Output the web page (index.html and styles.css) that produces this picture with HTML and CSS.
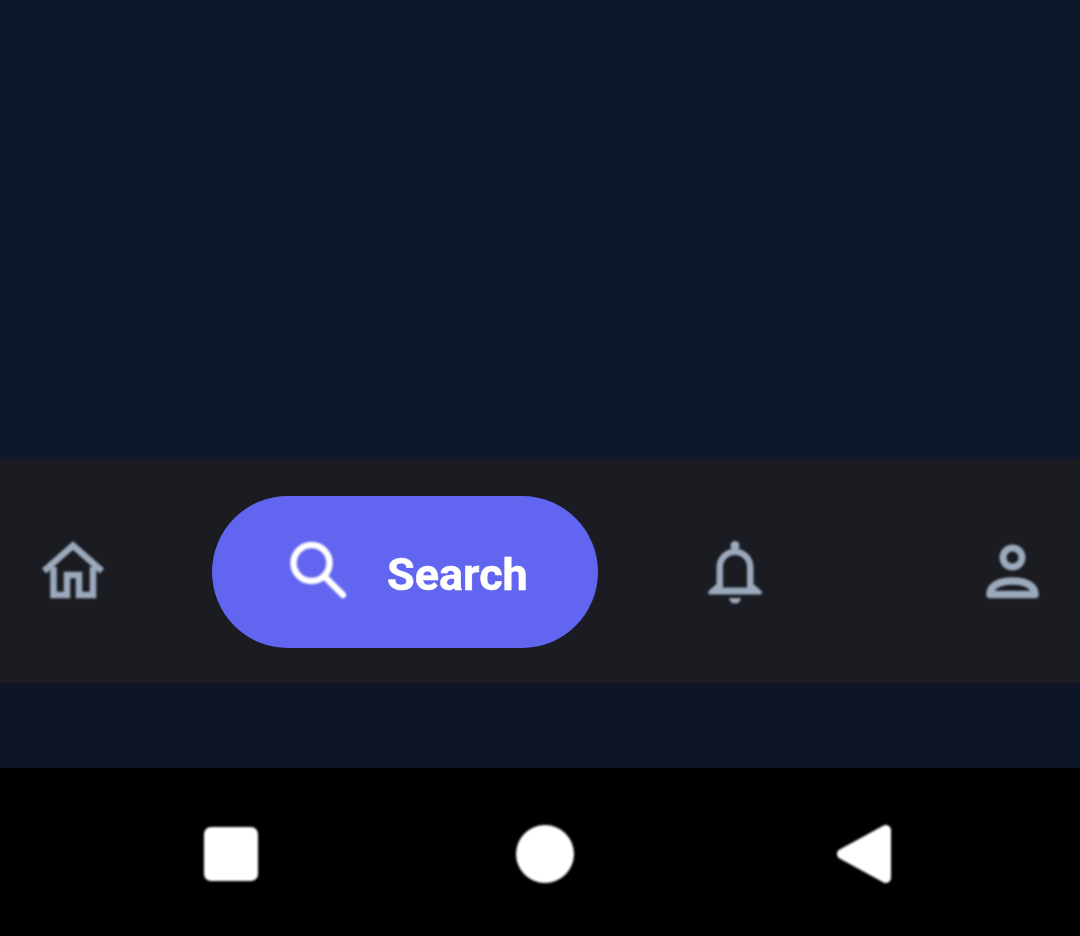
FILE: index.html
```html
<!DOCTYPE html>
<html lang="en">
<head>
    <meta charset="UTF-8">
    <meta name="viewport" content="width=device-width, initial-scale=1.0">
    <title>Search</title>
    <link rel="stylesheet" href="styles.css">
</head>
<body>
    <main class="content"></main>
    <nav class="tabbar">
        <a class="tab tab-home" href="#" aria-label="Home">
            <svg width="64" height="64" viewBox="0 0 64 64" fill="none" stroke="#9ba9bc" stroke-width="6.500">
                <path d="M3 31 L32 5.500 L61 31"/>
                <path d="M12.500 27 V55 H26 V35 H38 V55 H52 V27"/>
            </svg>
        </a>
        <a class="search-pill" href="#">
            <svg width="56" height="64" viewBox="0 0 56 64" fill="none" stroke="#fff" stroke-width="6.500">
                <circle cx="21.500" cy="23" r="18"/>
                <path d="M35 37 L53 55" stroke-linecap="round"/>
            </svg>
            <span class="search-label">Search</span>
        </a>
        <a class="tab tab-bell" href="#" aria-label="Notifications">
            <svg width="56" height="64" viewBox="0 0 56 64" fill="#9ba9bc" stroke="none">
                <circle cx="27" cy="5.500" r="4.500"/>
                <path fill-rule="evenodd" d="M8.500 27 a18.500 18.500 0 0 1 37 0 V44 L53 50.500 Q55.500 54.500 51.500 54.500 H2.500 Q-1.500 54.500 1 50.500 L8.500 44 Z M15 47.500 H39 V27 a12 12 0 0 0 -24 0 Z"/>
                <path d="M21 58 H33 Q32 63.500 27 63.500 Q22 63.500 21 58 Z"/>
            </svg>
        </a>
        <a class="tab tab-person" href="#" aria-label="Profile">
            <svg width="54" height="64" viewBox="0 0 54 64" fill="none" stroke="#9ba9bc">
                <circle cx="26.500" cy="17.500" r="9.500" stroke-width="7"/>
                <path d="M4 54.500 C4 46 13 41 26.500 41 S49 46 49 54.500 Z" stroke-width="7.500" stroke-linejoin="round"/>
            </svg>
        </a>
    </nav>
    <div class="gap-strip"></div>
    <div class="system-bar">
        <span class="sys-square"></span>
        <span class="sys-circle"></span>
        <svg class="sys-back" width="56" height="60" viewBox="0 0 56 60" fill="#fff" stroke="#fff" stroke-width="10" stroke-linejoin="round">
            <path d="M6 30 L50 6 V54 Z"/>
        </svg>
    </div>
</body>
</html>
```

FILE: styles.css
```css
body {
    margin: 0;
    padding: 0;
    height: 936px;
    overflow: hidden;
    display: flex;
    flex-direction: column;
    background-color: #0f172a;
    font-family: Roboto, "Liberation Sans", sans-serif;
}
.content {
    height: 459px;
    background-color: #0f172a;
}
.tabbar {
    height: 224px;
    box-sizing: border-box;
    padding: 2px 0 0 41px;
    display: flex;
    align-items: center;
    background-color: #1a1c22;
}
.tabbar a {
    text-decoration: none;
}
.tab {
    display: flex;
}
.tab svg, .search-pill svg, .sys-back, .sys-square, .sys-circle {
    filter: blur(0.8px);
}
.tab-bell {
    margin-left: 110px;
}
.tab-person {
    margin-left: 222px;
}
.search-pill {
    width: 386px;
    height: 152px;
    box-sizing: border-box;
    margin-left: 107px;
    padding-left: 78px;
    display: flex;
    align-items: center;
    gap: 41px;
    border-radius: 76px;
    background-color: #6265f0;
}
.search-label {
    padding-top: 5px;
    color: #fff;
    font-size: 45px;
    font-weight: 700;
    -webkit-text-stroke: 0.5px #fff;
    filter: blur(0.6px);
}
.gap-strip {
    height: 85px;
    background-color: #0d1526;
}
.system-bar {
    height: 168px;
    box-sizing: border-box;
    padding: 3px 0 0 204px;
    display: flex;
    align-items: center;
    background-color: #000;
}
.sys-square {
    width: 54px;
    height: 54px;
    border-radius: 7px;
    background-color: #fff;
}
.sys-circle {
    width: 58px;
    height: 58px;
    margin-left: 258px;
    border-radius: 50%;
    background-color: #fff;
}
.sys-back {
    margin-left: 262px;
}
```
